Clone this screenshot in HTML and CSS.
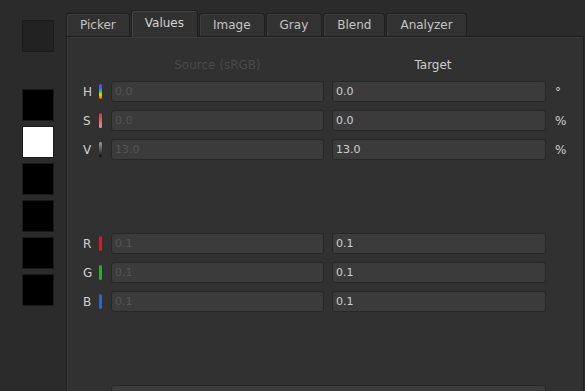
FILE: index.html
```html
<!DOCTYPE html>
<html lang="en">
<head>
    <meta charset="UTF-8">
    <meta name="viewport" content="width=device-width, initial-scale=1.0">
    <title>Color Values</title>
    <link rel="stylesheet" href="styles.css">
</head>
<body>
    <div class="app">
        <!-- Swatch history -->
        <div class="swatches">
            <div class="swatch swatch-current"></div>
            <div class="swatch-list">
                <div class="swatch swatch-black"></div>
                <div class="swatch swatch-white"></div>
                <div class="swatch swatch-black"></div>
                <div class="swatch swatch-black"></div>
                <div class="swatch swatch-black"></div>
                <div class="swatch swatch-black"></div>
            </div>
        </div>

        <div class="main">
            <div class="tabs">
                <div class="tab">Picker</div>
                <div class="tab tab-active">Values</div>
                <div class="tab">Image</div>
                <div class="tab">Gray</div>
                <div class="tab">Blend</div>
                <div class="tab">Analyzer</div>
            </div>

            <div class="panel">
                <div class="row head">
                    <span class="label"></span>
                    <span class="bar bar-none"></span>
                    <span class="col-title dim">Source (sRGB)</span>
                    <span class="col-title target">Target</span>
                </div>

                <div class="group">
                    <div class="row">
                        <span class="label">H</span>
                        <span class="bar bar-h"></span>
                        <div class="field field-src">0.0</div>
                        <div class="field">0.0</div>
                        <span class="unit">°</span>
                    </div>
                    <div class="row">
                        <span class="label">S</span>
                        <span class="bar bar-s"></span>
                        <div class="field field-src">0.0</div>
                        <div class="field">0.0</div>
                        <span class="unit">%</span>
                    </div>
                    <div class="row">
                        <span class="label">V</span>
                        <span class="bar bar-v"></span>
                        <div class="field field-src">13.0</div>
                        <div class="field">13.0</div>
                        <span class="unit">%</span>
                    </div>
                </div>

                <div class="group">
                    <div class="row">
                        <span class="label">R</span>
                        <span class="bar bar-r"></span>
                        <div class="field field-src">0.1</div>
                        <div class="field">0.1</div>
                    </div>
                    <div class="row">
                        <span class="label">G</span>
                        <span class="bar bar-g"></span>
                        <div class="field field-src">0.1</div>
                        <div class="field">0.1</div>
                    </div>
                    <div class="row">
                        <span class="label">B</span>
                        <span class="bar bar-b"></span>
                        <div class="field field-src">0.1</div>
                        <div class="field">0.1</div>
                    </div>
                </div>

                <div class="group">
                    <div class="row">
                        <span class="label"></span>
                        <span class="bar bar-a"></span>
                        <div class="field field-wide"></div>
                    </div>
                </div>
            </div>
        </div>
    </div>
</body>
</html>
```

FILE: styles.css
```css
:root {
    --page-bg: #2b2b2b;
    --panel-bg: #313131;
    --field-bg: #3b3b3b;
    --border-dark: #1f1f1f;
    --text: #cfcfcf;
    --text-dim: #555555;
    --font-ui: 'DejaVu Sans', Verdana, sans-serif;
}
html, body {
    margin: 0;
    padding: 0;
    height: 100%;
    overflow: hidden;
}
body {
    font-family: var(--font-ui);
    font-size: 12px;
    background-color: var(--page-bg);
    color: var(--text);
}
.app {
    display: flex;
    height: 100%;
}

/* swatch column */
.swatches {
    width: 44px;
    padding: 20px 0 0 22px;
    display: flex;
    flex-direction: column;
    gap: 37px;
}
.swatch-list {
    display: flex;
    flex-direction: column;
    gap: 5px;
}
.swatch {
    width: 30px;
    height: 30px;
    border: 1px solid #1a1a1a;
}
.swatch-current { background: #222222; }
.swatch-black { background: #000000; }
.swatch-white { background: #ffffff; }

/* tabs + panel */
.main {
    flex: 1;
    display: flex;
    flex-direction: column;
    padding-right: 1px;
}
.tabs {
    display: flex;
    align-items: flex-end;
    gap: 1px;
    padding-top: 12px;
    height: 24px;
    position: relative;
    z-index: 1;
}
.tab {
    height: 22px;
    line-height: 22px;
    padding: 0 13px;
    border: 1px solid var(--border-dark);
    border-bottom: none;
    border-radius: 3px 3px 0 0;
    background: #323232;
    box-shadow: inset 1px 1px 0 #3d3d3d;
    color: #c4c4c4;
}
.tab-active {
    height: 26px;
    line-height: 24px;
    margin-bottom: -1px;
    background: var(--panel-bg);
    box-shadow: inset 1px 1px 0 #444444;
    color: #d2d2d2;
}
.panel {
    flex: 1;
    background: var(--panel-bg);
    border: 1px solid var(--border-dark);
    border-bottom: none;
    box-shadow: inset 1px 1px 0 #3a3a3a;
    padding: 20px 0 0 16px;
    display: flex;
    flex-direction: column;
    gap: 73px;
}
.group {
    display: flex;
    flex-direction: column;
    gap: 8px;
}
.row {
    display: flex;
    align-items: center;
    height: 21px;
}
.head {
    height: 16px;
    margin-bottom: -65px;
}
.label {
    width: 16px;
    flex: none;
    color: #d0d0d0;
}
.bar {
    width: 3px;
    height: 15px;
    margin-right: 9px;
    border-radius: 2px;
    flex: none;
}
.bar-none { background: none; }
.bar-h { background: linear-gradient(#8a3ce0, #3c5cf0 25%, #30c060 50%, #e8d020 72%, #f05020); }
.bar-s { background: linear-gradient(#c03a3a, #d89a9a); }
.bar-v { background: linear-gradient(#a0a0a0, #101010); }
.bar-r { background: #c02626; }
.bar-g { background: #30a83a; }
.bar-b { background: #3264b8; }
.bar-a { background: #8a8a8a; align-self: flex-end; height: 4px; }
.col-title {
    width: 214px;
    text-align: center;
    margin-right: 8px;
    color: #cccccc;
}
.col-title.dim {
    width: 213px;
    color: #4a4a4a;
}
.col-title.target {
    width: 202px;
    padding-right: 12px;
}
.field {
    width: 206px;
    height: 19px;
    line-height: 19px;
    padding: 0 3px;
    background: var(--field-bg);
    border: 1px solid #272727;
    border-radius: 3px;
    font-size: 11px;
    color: #cfcfcf;
    flex: none;
}
.field-src {
    width: 205px;
    margin-right: 8px;
    color: var(--text-dim);
}
.field-wide {
    width: 427px;
}
.unit {
    margin-left: 9px;
    color: #d0d0d0;
}
```
